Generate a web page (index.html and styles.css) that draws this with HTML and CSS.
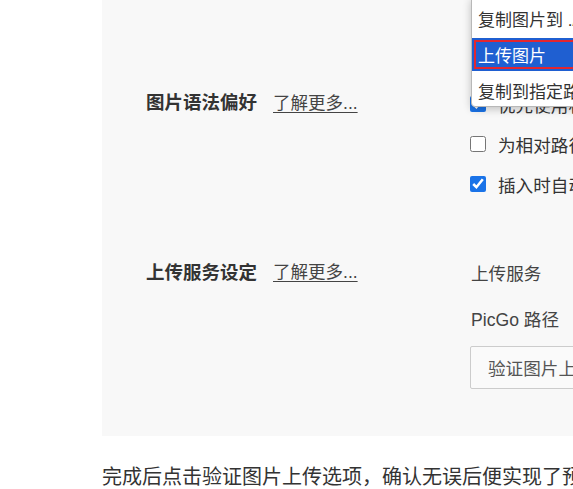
FILE: index.html
```html
<!DOCTYPE html>
<html lang="zh-CN">
<head>
<meta charset="utf-8">
<title>图片上传设置</title>
<link rel="stylesheet" href="styles.css">
</head>
<body>
<div class="page">
  <div class="panel">
    <div class="row row-a">
      <div class="label"><span class="title">图片语法偏好</span><a class="more" href="#">了解更多...</a></div>
      <div class="opts">
        <label class="opt"><input type="checkbox" checked>优先使用相对路径</label>
        <label class="opt"><input type="checkbox">为相对路径添加 ./</label>
        <label class="opt"><input type="checkbox" checked>插入时自动转义图片 URL</label>
      </div>
    </div>
    <div class="row row-b">
      <div class="label"><span class="title">上传服务设定</span><a class="more" href="#">了解更多...</a></div>
      <div class="opts">
        <div class="field">上传服务</div>
        <div class="field">PicGo 路径</div>
        <button class="btn" type="button">验证图片上传选项</button>
      </div>
    </div>
    <ul class="dropdown">
      <li class="item item-first">复制图片到 ./${filename}.assets</li>
      <li class="item item-active">上传图片</li>
      <li class="item item-last">复制到指定路径</li>
    </ul>
  </div>
  <p class="after">完成后点击验证图片上传选项，确认无误后便实现了预览与上传的自动化。</p>
</div>
</body>
</html>
```

FILE: styles.css
```css
html, body {
  margin: 0;
  padding: 0;
  background: #ffffff;
  overflow: hidden;
  width: 573px;
  height: 489px;
}

.page {
  width: 900px;
  padding-left: 102px;
  font-family: "Liberation Sans", "Noto Sans CJK SC", sans-serif;
  color: #333333;
}

.panel {
  position: relative;
  background: #f8f8f8;
  padding: 81px 0 47px 44px;
  display: flex;
  flex-direction: column;
  gap: 45px;
}

.row {
  display: grid;
  grid-template-columns: 325px 1fr;
  align-items: start;
}

.label {
  display: flex;
  align-items: center;
  gap: 16px;
  white-space: nowrap;
}

.row-a .label { height: 40px; }
.row-b .label { height: 43px; }

.title {
  font-size: 18.5px;
  font-weight: bold;
  color: #333333;
}

.more {
  font-size: 17.5px;
  color: #444444;
  text-decoration: underline;
  text-underline-offset: 3px;
}

.opts {
  display: flex;
  flex-direction: column;
  align-items: flex-start;
  font-size: 17.6px;
  white-space: nowrap;
}

.row-a .opts { margin-top: 3px; }

.opt {
  height: 40px;
  display: flex;
  align-items: center;
}

.opt input {
  width: 16px;
  height: 16px;
  margin: 0 12px 0 -1px;
  accent-color: #1a73e8;
}

.field {
  height: 46px;
  display: flex;
  align-items: center;
  color: #444444;
}

.btn {
  margin-top: 5px;
  margin-left: -1px;
  height: 43px;
  padding: 0 17px;
  border: 1px solid #cccccc;
  border-radius: 2px;
  background: #fafafa;
  color: #555555;
  font-family: "Liberation Sans", "Noto Sans CJK SC", sans-serif;
  font-size: 17.6px;
}

.dropdown {
  position: absolute;
  left: 369px;
  top: -2px;
  width: 260px;
  margin: 0;
  padding: 0;
  list-style: none;
  background: #ffffff;
  border: 1px solid #b8b8b8;
  border-radius: 0 0 4px 4px;
  box-shadow: 0 2px 9px rgba(0, 0, 0, 0.24);
  font-size: 17px;
  color: #333333;
  white-space: nowrap;
}

.item {
  padding-left: 6px;
  display: flex;
  align-items: center;
  overflow: hidden;
}

.item-first { height: 39px; }

.item-active {
  height: 33px;
  background: #1f5fd1;
  color: #ffffff;
  box-shadow: inset 0 0 0 2px #1f5fd1, inset 0 0 0 4px #e3262f;
}

.item-last {
  height: 35px;
  padding-top: 3px;
  box-sizing: border-box;
}

.after {
  margin: 25px 0 0 0;
  font-size: 20px;
  line-height: 30px;
  color: #333333;
  white-space: nowrap;
  font-family: "Noto Sans CJK SC", sans-serif;
}
```
